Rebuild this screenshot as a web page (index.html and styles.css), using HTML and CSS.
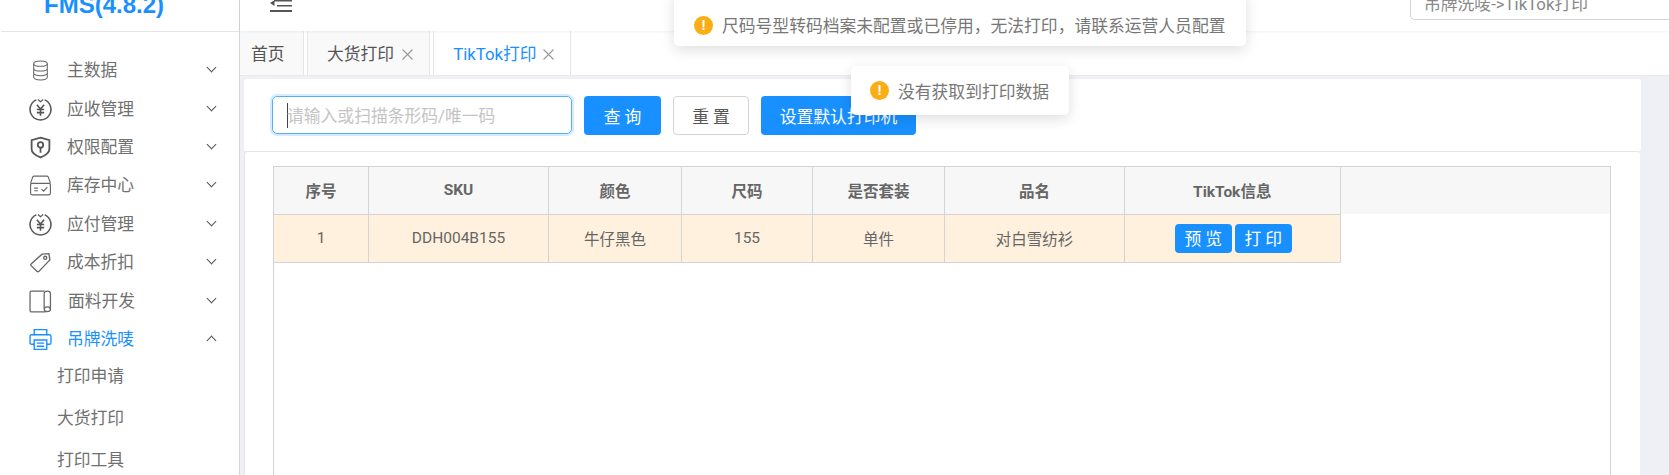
FILE: index.html
```html
<!DOCTYPE html>
<html lang="zh-CN">
<head>
<meta charset="utf-8">
<title>FMS</title>
<link rel="stylesheet" href="styles.css">
</head>
<body>
<div class="app">
  <aside class="sidebar">
    <div class="logo">FMS(4.8.2)</div>
    <nav class="menu">
      <div class="item">
        <svg class="ico" viewBox="0 0 22 22"><g fill="none" stroke="#666" stroke-width="1"><ellipse cx="11" cy="4.500" rx="6.500" ry="2.500"/><path d="M4.500 4.500V17.500C4.500 19 7.500 20 11 20S17.500 19 17.500 17.500V4.500M4.500 9C4.500 10.500 7.500 11.500 11 11.500S17.500 10.500 17.500 9M4.500 13.500C4.500 15 7.500 16 11 16S17.500 15 17.500 13.500"/></g></svg>
        <span class="label">主数据</span><i class="chev"></i>
      </div>
      <div class="item">
        <svg class="ico" viewBox="0 0 22 22"><g fill="none" stroke="#555" stroke-width="1.500"><path d="M7 1.800A10 10 0 1 0 15 1.800"/><path d="M8.500 1.500L11 3.500L13.500 1.500" stroke-width="1.100"/><path d="M7.500 6.500L11 10.500L14.500 6.500M11 10.500V17M7.500 11H14.500M7.500 14H14.500"/></g></svg>
        <span class="label">应收管理</span><i class="chev"></i>
      </div>
      <div class="item">
        <svg class="ico" viewBox="0 0 22 22"><g fill="none" stroke="#555" stroke-width="1.700"><path d="M11 1.500L19.500 4V12.500C19.500 16 15 19 11 20.500C7 19 2.500 16 2.500 12.500V4Z"/><circle cx="11" cy="8.500" r="2.600"/><path d="M11 11V16"/></g></svg>
        <span class="label">权限配置</span><i class="chev"></i>
      </div>
      <div class="item">
        <svg class="ico" viewBox="0 0 22 22"><g fill="none" stroke="#666" stroke-width="1.100"><path d="M1.500 9L3.500 3C3.800 2.200 4.300 2 5 2H17C17.700 2 18.200 2.200 18.500 3L20.500 9"/><rect x="1.500" y="9" width="19" height="11" rx="1.500"/><path d="M5 13.500H8.500M5 16H8.500M12 14.500L14 16.500L17.500 12.500"/></g></svg>
        <span class="label">库存中心</span><i class="chev"></i>
      </div>
      <div class="item">
        <svg class="ico" viewBox="0 0 22 22"><g fill="none" stroke="#555" stroke-width="1.500"><path d="M7 1.800A10 10 0 1 0 15 1.800"/><path d="M8.500 1.500L11 3.500L13.500 1.500" stroke-width="1.100"/><path d="M7.500 6.500L11 10.500L14.500 6.500M11 10.500V17M7.500 11H14.500M7.500 14H14.500"/></g></svg>
        <span class="label">应付管理</span><i class="chev"></i>
      </div>
      <div class="item">
        <svg class="ico" viewBox="0 0 22 22"><g fill="none" stroke="#666" stroke-width="1.300"><path d="M2 12.500L12.500 3L19 2.500L20 8.500L9.500 19.500C9 20 8.300 20 7.800 19.500L2 14C1.600 13.600 1.600 13 2 12.500Z"/><circle cx="15.500" cy="6.500" r="1.500"/></g></svg>
        <span class="label">成本折扣</span><i class="chev"></i>
      </div>
      <div class="item">
        <svg class="ico" viewBox="0 0 22 22"><g fill="none" stroke="#666" stroke-width="1.200"><path d="M15 1H2.500C1.400 1 1 1.400 1 2.500V19.500C1 20.500 1.400 21 2.500 21H16"/><path d="M14.500 17.500V3.500C14.500 1.800 15.800 1 17.500 1S20.500 1.800 20.500 3.500V18.500"/><ellipse cx="17.500" cy="18.500" rx="3" ry="2.300"/></g></svg>
        <span class="label label-offset">面料开发</span><i class="chev"></i>
      </div>
      <div class="item active">
        <svg class="ico" viewBox="0 0 22 22"><g fill="none" stroke="#1890ff" stroke-width="1.300"><path d="M5 7V1.500H17V7"/><path d="M5 15.500H2.500C1.500 15.500 1 15 1 14V8C1 7 1.500 6.500 2.500 6.500H19.500C20.500 6.500 21 7 21 8V14C21 15 20.500 15.500 19.500 15.500H17"/><path d="M5 11.500H17V20.500H5ZM7.500 14.500H14.500M7.500 17.500H14.500"/></g></svg>
        <span class="label">吊牌洗唛</span><i class="chev up"></i>
      </div>
      <div class="sub">打印申请</div>
      <div class="sub">大货打印</div>
      <div class="sub">打印工具</div>
    </nav>
  </aside>
  <main class="main">
    <header class="top">
      <svg class="fold" viewBox="0 0 22 12"><path fill="#555" d="M4 0H22V1.500H4ZM7 5H22V6.500H7ZM0 10H22V12H0ZM4.500 0V6L0 3Z"/></svg>
      <div class="crumb">吊牌洗唛-&gt;TikTok打印</div>
    </header>
    <div class="tabs">
      <div class="tab home">首页</div>
      <div class="tab">大货打印<svg class="x" viewBox="0 0 11 11"><path d="M.5.500L10.500 10.500M10.500.500L.5 10.500"/></svg></div>
      <div class="tab current">TikTok打印<svg class="x" viewBox="0 0 11 11"><path d="M.5.500L10.500 10.500M10.500.500L.5 10.500"/></svg></div>
    </div>
    <section class="search">
      <div class="input"><i class="caret"></i><span>请输入或扫描条形码/唯一码</span></div>
      <button class="btn primary wide">查 询</button>
      <button class="btn plain">重 置</button>
      <button class="btn primary printer">设置默认打印机</button>
    </section>
    <section class="panel">
      <div class="grid">
        <table>
          <colgroup>
            <col class="c1"><col class="c2"><col class="c3"><col class="c4"><col class="c5"><col class="c6"><col class="c7">
          </colgroup>
          <thead>
            <tr><th>序号</th><th>SKU</th><th>颜色</th><th>尺码</th><th>是否套装</th><th>品名</th><th>TikTok信息</th></tr>
          </thead>
          <tbody>
            <tr>
              <td>1</td><td>DDH004B155</td><td>牛仔黑色</td><td>155</td><td>单件</td><td>对白雪纺衫</td>
              <td><div class="acts"><button class="mini">预 览</button><button class="mini">打 印</button></div></td>
            </tr>
          </tbody>
        </table>
      </div>
    </section>
  </main>
</div>
<div class="toast toast-a"><i class="warn">!</i><span>尺码号型转码档案未配置或已停用，无法打印，请联系运营人员配置</span></div>
<div class="toast toast-b"><i class="warn">!</i><span>没有获取到打印数据</span></div>
</body>
</html>
```
FILE: styles.css
```css
* { box-sizing: border-box; }
html, body { margin: 0; padding: 0; height: 475px; overflow: hidden; background: #eff0f5; }
body { font-family: Roboto, "Noto Sans CJK SC", sans-serif; color: #666; position: relative; }
.app { display: flex; height: 475px; }

.sidebar { width: 240px; flex: none; background: #fff; border-right: 1px solid #d4d6da; overflow: hidden; }
.logo { height: 32px; border-bottom: 1px solid #e6e6e6; margin-left: 1px; padding-left: 43px; font: bold 24px/10px "Liberation Sans", sans-serif; color: #1890ff; white-space: nowrap; }
.menu { padding-top: 19.5px; }
.item { height: 38.4px; display: flex; align-items: center; padding: 0 24px 0 29px; font-size: 16.8px; color: #707070; }
.item.active { color: #1890ff; }
.ico { width: 23px; height: 23px; flex: none; }
.label { margin-left: 15px; flex: 1; line-height: 1; white-space: nowrap; }
.label-offset { margin-left: 16px; }
.chev { width: 7px; height: 7px; border-right: 1.8px solid #555; border-bottom: 1.8px solid #555; transform: rotate(45deg); margin-bottom: 6px; }
.chev.up { transform: rotate(225deg); margin-bottom: -2px; }
.sub { height: 42px; padding-left: 57px; display: flex; align-items: center; font-size: 16.8px; color: #707070; }
.item.active + .sub { height: 33px; margin-bottom: 4px; }

.main { flex: 1; min-width: 0; display: flex; flex-direction: column; }
.top { height: 31px; flex: none; background: #fff; display: flex; justify-content: space-between; box-shadow: 0 1px 3px rgba(0,0,0,.06); position: relative; }
.fold { width: 22px; height: 12px; margin-left: 30px; }
.crumb { width: 259px; height: 21px; margin-top: -1px; border: 1px solid #d4d4d4; border-width: 0 0 1px 1px; border-radius: 0 0 0 5px; padding-left: 13px; font-size: 16.8px; line-height: 11px; color: #888; white-space: nowrap; overflow: hidden; }
.tabs { height: 45px; flex: none; background: #fff; display: flex; gap: 3px; border-bottom: 1px solid #e8eaee; }
.tab { height: 44px; padding: 0 16px 0 19px; display: flex; align-items: center; background: #f9f9f9; border: 1px solid #e6e6e6; border-width: 0 1px; font-size: 16.8px; color: #555; white-space: nowrap; }
.tab.home { border-left: 0; padding: 0 11px; width: 64px; }
.tab.current { background: #fff; color: #1890ff; padding: 0 16px 0 19px; }
.tab.current .x { margin-left: 6px; }
.x { width: 11px; height: 11px; margin-left: 8px; margin-top: 2px; fill: none; stroke: #999; stroke-width: 1.100; }

.search { margin: 3px 28px 0 4px; height: 72px; flex: none; background: #fff; border-radius: 3px; display: flex; align-items: flex-start; padding: 17px 0 0 28px; }
.input { width: 300px; height: 38px; border: 1px solid #58adfc; border-radius: 5px; box-shadow: 0 0 0 2px rgba(24,144,255,.18); display: flex; align-items: center; padding-left: 14px; font-size: 16.8px; color: #c4c4c4; white-space: nowrap; margin-right: 12px; }
.caret { width: 1px; height: 25px; background: #444; margin-right: -1px; flex: none; }
.btn { height: 39px; border-radius: 4px; border: 1px solid transparent; font-family: inherit; font-size: 16.8px; padding: 0; margin-right: 12px; }
.primary { background: #1890ff; color: #fff; }
.wide { width: 77px; }
.plain { width: 76px; background: #fff; border-color: #d4d4d4; color: #555; }
.printer { width: 155px; }

.panel { margin: 0 29px 0 4px; flex: 1; min-height: 0; background: #fff; border-top: 1px solid #e6e6e6; border-left: 1px solid #e6e6e6; padding: 14px 0 0 28px; border-radius: 3px 3px 0 0; }
.grid { width: 1338px; height: 400px; background: #fff; border: 1px solid #d4d4d4; position: relative; }
.grid::before { content: ""; position: absolute; left: 0; right: 0; top: 0; height: 47px; background: #f7f7f7; }
table { border-collapse: collapse; table-layout: fixed; width: 1066px; position: relative; font-size: 15.5px; }
.c1 { width: 94.500px; } .c2 { width: 180px; } .c3 { width: 133px; } .c4 { width: 131px; } .c5 { width: 132px; } .c6 { width: 180px; } .c7 { width: 215.500px; }
th, td { border: 1px solid #d4d4d4; text-align: center; color: #666; padding: 0; }
th:first-child, td:first-child { border-left: 0; }
thead tr:first-child th { border-top: 0; }
th { height: 47px; background: #f7f7f7; font-weight: 700; }
td { height: 48px; background: #fff1de; }
.acts { display: flex; justify-content: center; gap: 3px; padding-left: 2px; }
.mini { width: 57px; height: 29px; border: 0; border-radius: 4px; background: #1890ff; color: #fff; font-family: inherit; font-size: 16.8px; padding: 0; }

.toast { position: absolute; background: #fff; border-radius: 5px; box-shadow: 0 4px 14px rgba(0,0,0,.13); display: flex; align-items: center; font-size: 16.8px; color: #777; white-space: nowrap; }
.toast-a { left: 674px; top: -10px; width: 572px; height: 56px; padding: 14px 0 0 20px; }
.toast-b { left: 851px; top: 66px; width: 218px; height: 49px; padding-left: 19px; }
.warn { width: 19px; height: 19px; border-radius: 50%; background: #faad14; color: #fff; font: bold 14px/19px "Liberation Sans", sans-serif; text-align: center; margin-right: 9px; flex: none; }
```
